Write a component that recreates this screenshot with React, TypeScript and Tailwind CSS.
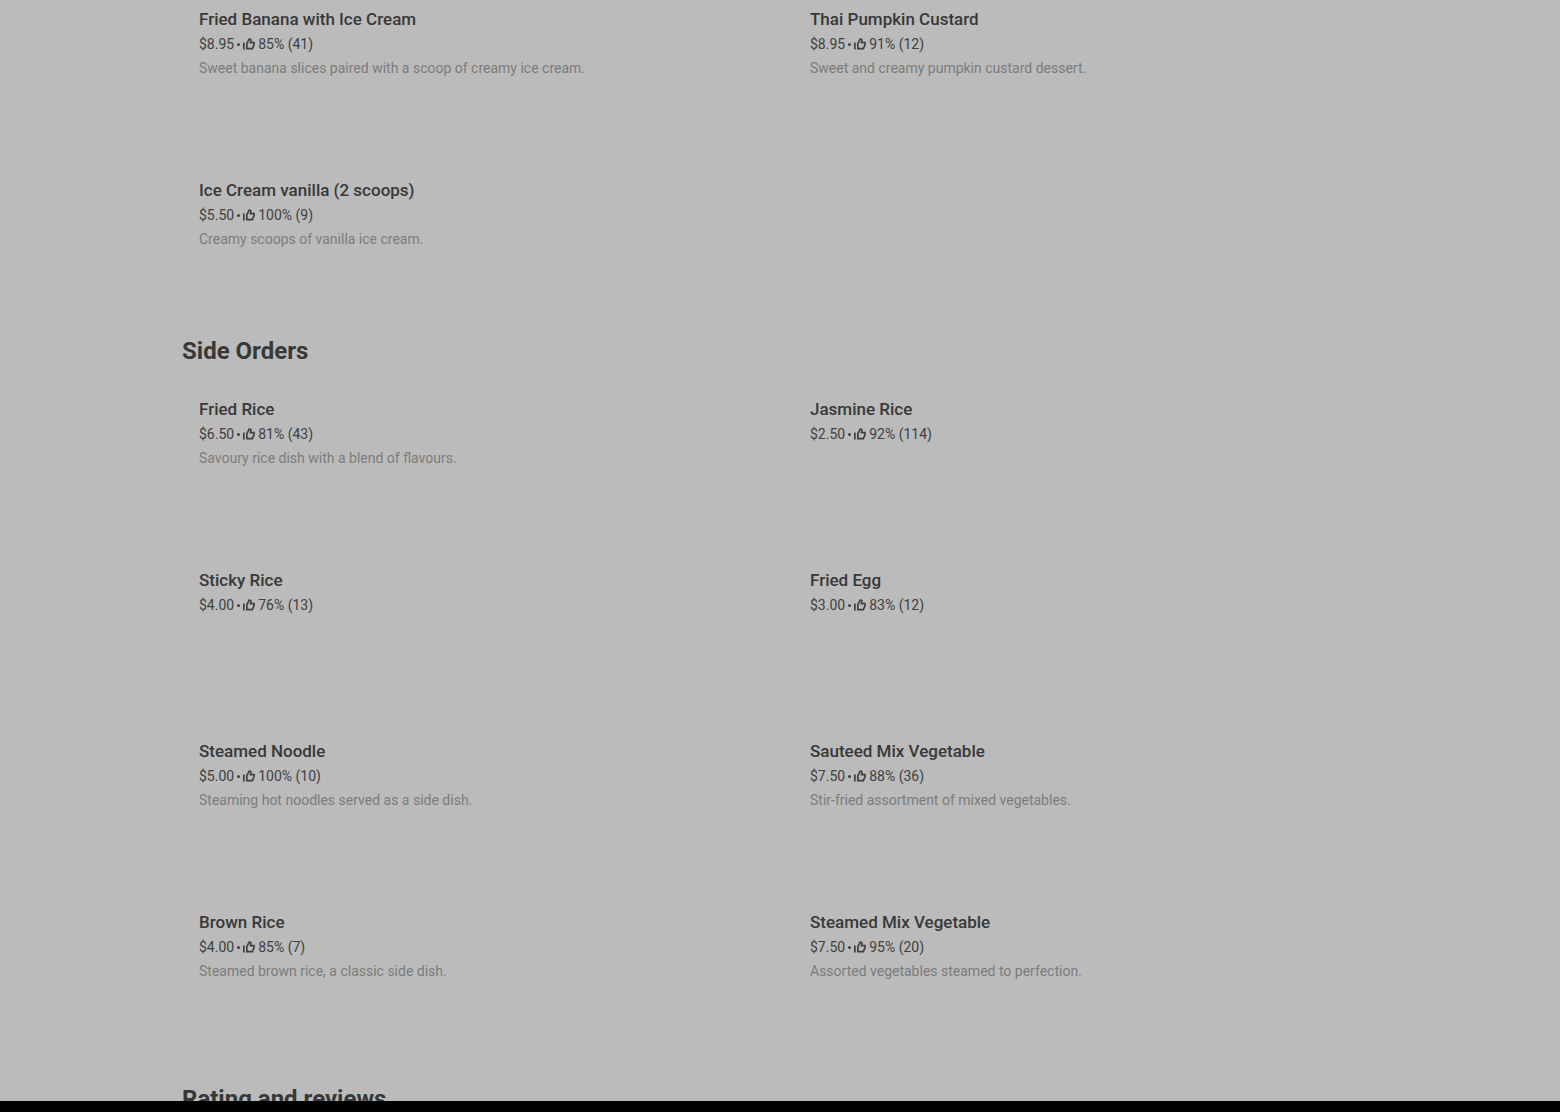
type MenuItem = {
  name: string;
  price: string;
  rating: number;
  votes: number;
  description?: string;
};

const desserts: MenuItem[] = [
  { name: 'Fried Banana with Ice Cream', price: '$8.95', rating: 85, votes: 41, description: 'Sweet banana slices paired with a scoop of creamy ice cream.' },
  { name: 'Thai Pumpkin Custard', price: '$8.95', rating: 91, votes: 12, description: 'Sweet and creamy pumpkin custard dessert.' },
  { name: 'Ice Cream vanilla (2 scoops)', price: '$5.50', rating: 100, votes: 9, description: 'Creamy scoops of vanilla ice cream.' },
];

const sides: MenuItem[] = [
  { name: 'Fried Rice', price: '$6.50', rating: 81, votes: 43, description: 'Savoury rice dish with a blend of flavours.' },
  { name: 'Jasmine Rice', price: '$2.50', rating: 92, votes: 114 },
  { name: 'Sticky Rice', price: '$4.00', rating: 76, votes: 13 },
  { name: 'Fried Egg', price: '$3.00', rating: 83, votes: 12 },
  { name: 'Steamed Noodle', price: '$5.00', rating: 100, votes: 10, description: 'Steaming hot noodles served as a side dish.' },
  { name: 'Sauteed Mix Vegetable', price: '$7.50', rating: 88, votes: 36, description: 'Stir-fried assortment of mixed vegetables.' },
  { name: 'Brown Rice', price: '$4.00', rating: 85, votes: 7, description: 'Steamed brown rice, a classic side dish.' },
  { name: 'Steamed Mix Vegetable', price: '$7.50', rating: 95, votes: 20, description: 'Assorted vegetables steamed to perfection.' },
];

function ThumbUp() {
  return (
    <svg className="w-3 h-3 shrink-0" viewBox="0 0 24 24" fill="none" aria-hidden="true">
      <path d="M0 9h3.4v14H0z" fill="currentColor" />
      <path
        d="M7.7 21.2V11.2L12.4 2c2.4 0 3.7 1.4 3.3 3.3L15 9.2h7v4.4l-3.4 7.6H7.7z"
        stroke="currentColor"
        strokeWidth="3.4"
      />
    </svg>
  );
}

function MenuCard({ item }: { item: MenuItem }) {
  return (
    <li>
      <a href="#" className="block h-[147px] rounded-xl border border-[#bfbfbf] px-4 pt-[13px]">
        <h3 className="text-[17px] leading-6 font-medium text-[#383838]">{item.name}</h3>
        <div className="mt-px flex items-center text-sm leading-6 text-[#404040]">
          <span>{item.price}</span>
          <span className="mx-[3px] h-[3px] w-[3px] rounded-full bg-[#404040]" />
          <ThumbUp />
          <span className="ml-[3px]">{item.rating}% ({item.votes})</span>
        </div>
        {item.description && (
          <p className="text-sm leading-6 text-[#7c7c7c]">{item.description}</p>
        )}
      </a>
    </li>
  );
}

function MenuGrid({ items }: { items: MenuItem[] }) {
  return (
    <ul className="grid grid-cols-2 gap-6">
      {items.map((item) => (
        <MenuCard key={item.name} item={item} />
      ))}
    </ul>
  );
}

export default function App() {
  return (
    <div className="flex h-screen flex-col bg-[#bbbbbb] font-['Roboto',sans-serif]">
      <main className="min-h-0 flex-1 overflow-hidden pr-[180px] pl-[182px]">
        {/* Desserts, scrolled slightly past the top */}
        <section className="-mt-[7px]">
          <MenuGrid items={desserts} />
        </section>

        {/* Side orders */}
        <section className="mt-6">
          <h2 className="mb-4 text-2xl leading-8 font-bold text-[#383838]">Side Orders</h2>
          <MenuGrid items={sides} />
        </section>

        {/* Reviews */}
        <section className="mt-10">
          <h2 className="text-2xl leading-8 font-bold text-[#383838]">Rating and reviews</h2>
        </section>
      </main>
      <footer className="h-[11px] shrink-0 bg-black" />
    </div>
  );
}
